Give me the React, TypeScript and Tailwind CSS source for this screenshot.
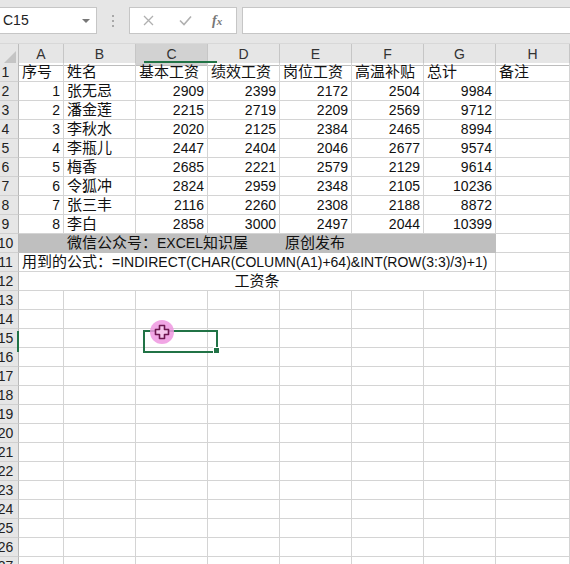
import React from "react";

const cols = ["A", "B", "C", "D", "E", "F", "G", "H"];
const gridCols = "grid grid-cols-[19px_45px_72px_72px_72px_72px_72px_72px_74px]";

const headers = ["序号", "姓名", "基本工资", "绩效工资", "岗位工资", "高温补贴", "总计", "备注"];

const people: [number, string, number, number, number, number, number][] = [
  [1, "张无忌", 2909, 2399, 2172, 2504, 9984],
  [2, "潘金莲", 2215, 2719, 2209, 2569, 9712],
  [3, "李秋水", 2020, 2125, 2384, 2465, 8994],
  [4, "李瓶儿", 2447, 2404, 2046, 2677, 9574],
  [5, "梅香", 2685, 2221, 2579, 2129, 9614],
  [6, "令狐冲", 2824, 2959, 2348, 2105, 10236],
  [7, "张三丰", 2116, 2260, 2308, 2188, 8872],
  [8, "李白", 2858, 3000, 2497, 2044, 10399],
];

// Chinese text renders a little wider than the Latin digits in the sheet
function Zh({ children }: { children: React.ReactNode }) {
  return <span className="text-[15px]">{children}</span>;
}

function RowHead({ n }: { n: number }) {
  return (
    <div className="flex h-[19px] items-center overflow-hidden border-r border-b border-r-[#b8b8b8] border-b-[#d0d0d0] bg-[#e6e6e6] text-[#222]">
      <div className="flex w-[11px] shrink-0 justify-center whitespace-nowrap">{n}</div>
    </div>
  );
}

function Cell({ children, right }: { children?: React.ReactNode; right?: boolean }) {
  return (
    <div
      className={
        "flex h-[19px] items-center overflow-hidden whitespace-nowrap border-r border-b border-[#d4d4d4] " +
        (right ? "justify-end pr-[3px]" : "pl-[3px]")
      }
    >
      {children}
    </div>
  );
}

function PlusCursor() {
  return (
    <svg width="16" height="16" viewBox="0 0 16 16">
      <path
        d="M5.5 1.5h5v4h4v5h-4v4h-5v-4h-4v-5h4z"
        fill="#f6c6ec"
        stroke="#6e1750"
        strokeWidth="1.6"
        strokeLinejoin="round"
      />
    </svg>
  );
}

export default function App() {
  return (
    <div className="relative h-[564px] w-[570px] overflow-hidden bg-white font-['Liberation_Sans','Noto_Sans_CJK_SC',sans-serif] text-[14px] text-[#111]">
      {/* formula bar */}
      <div className="flex h-[44px] items-start border-b border-[#d8d8d8] bg-[#e6e6e6] pt-[7px]">
        <div className="flex h-[27px] w-[97px] items-center justify-between border border-l-0 border-[#c6c6c6] bg-white pl-[3px] pr-[6px]">
          <span className="text-[14px] text-[#222]">C15</span>
          <span className="h-0 w-0 border-x-[4px] border-t-[4px] border-x-transparent border-t-[#777]" />
        </div>
        <div className="ml-[15px] mt-[8px] flex flex-col gap-[3px]">
          <span className="h-[2px] w-[2px] bg-[#a8a8a8]" />
          <span className="h-[2px] w-[2px] bg-[#a8a8a8]" />
          <span className="h-[2px] w-[2px] bg-[#a8a8a8]" />
        </div>
        <div className="ml-[15px] flex h-[27px] w-[108px] items-center border border-[#c6c6c6] bg-white">
          <svg className="ml-[13px]" width="11" height="11" viewBox="0 0 11 11">
            <path d="M1 1l9 9M10 1l-9 9" stroke="#b0b0b0" strokeWidth="1.3" />
          </svg>
          <svg className="ml-[25px]" width="13" height="11" viewBox="0 0 13 11">
            <path d="M1 5.5l4 4L12 1.5" fill="none" stroke="#b0b0b0" strokeWidth="1.6" />
          </svg>
          <span className="ml-[20px] font-['Liberation_Serif',serif] text-[14px] font-bold italic text-[#777]">
            f<span className="text-[11px]">x</span>
          </span>
        </div>
        <div className="ml-[5px] h-[27px] flex-1 border border-r-0 border-[#c6c6c6] bg-white" />
      </div>

      {/* column headers */}
      <div className={gridCols + " h-[19px] bg-[#e6e6e6] text-[#333]"}>
        <div className="flex items-end justify-end border-r border-b border-[#bdbdbd] pb-[2px] pr-[2px]">
          <svg width="12" height="12" viewBox="0 0 12 12">
            <path d="M12 0V12H0z" fill="#c4c4c4" />
          </svg>
        </div>
        {cols.map((c) => (
          <div
            key={c}
            className={
              "flex items-center justify-center border-r border-b border-r-[#c6c6c6] border-b-[#bdbdbd] " +
              (c === "C" ? "bg-[#d2d2d2]" : "")
            }
          >
            {c}
          </div>
        ))}
      </div>

      {/* sheet */}
      <div className={gridCols}>
        <RowHead n={1} />
        {headers.map((h) => (
          <Cell key={h}>
            <Zh>{h}</Zh>
          </Cell>
        ))}

        {people.map((p, i) => (
          <React.Fragment key={p[0]}>
            <RowHead n={i + 2} />
            <Cell right>{p[0]}</Cell>
            <Cell>
              <Zh>{p[1]}</Zh>
            </Cell>
            <Cell right>{p[2]}</Cell>
            <Cell right>{p[3]}</Cell>
            <Cell right>{p[4]}</Cell>
            <Cell right>{p[5]}</Cell>
            <Cell right>{p[6]}</Cell>
            <Cell />
          </React.Fragment>
        ))}

        <RowHead n={10} />
        <div className="col-span-7 flex h-[19px] items-center whitespace-nowrap bg-[#bfbfbf] pl-[48px]">
          <span className="w-[218px]">
            <Zh>微信公众号：</Zh>EXCEL<Zh>知识屋</Zh>
          </span>
          <Zh>原创发布</Zh>
        </div>
        <Cell />

        <RowHead n={11} />
        <div className="col-span-7 flex h-[19px] items-center whitespace-nowrap border-r border-b border-[#d4d4d4] pl-[3px]">
          <Zh>用到的公式：</Zh>
          <span>=INDIRECT(CHAR(COLUMN(A1)+64)&amp;INT(ROW(3:3)/3)+1)</span>
        </div>
        <Cell />

        <RowHead n={12} />
        <div className="col-span-7 flex h-[19px] items-center justify-center border-r border-b border-[#d4d4d4]">
          <Zh>工资条</Zh>
        </div>
        <Cell />

        {Array.from({ length: 15 }, (_, i) => i + 13).map((n) => (
          <React.Fragment key={n}>
            <RowHead n={n} />
            {cols.map((c) => (
              <Cell key={c} />
            ))}
          </React.Fragment>
        ))}
      </div>

      {/* selection overlays */}
      <div className="absolute left-[144px] top-[61px] h-[2px] w-[73px] bg-[#217346]" />
      <div className="absolute left-[17px] top-[331px] h-[21px] w-[2px] bg-[#217346]" />
      <div className="absolute left-[143px] top-[330px] h-[23px] w-[75px] border-2 border-[#217346]" />
      <div className="absolute left-[213px] top-[347px] h-[7px] w-[7px] border border-white bg-[#217346]" />

      {/* click cursor */}
      <div className="absolute left-[150px] top-[320px] flex h-[24px] w-[24px] items-center justify-center rounded-full bg-[#ee96e0]/85">
        <PlusCursor />
      </div>
    </div>
  );
}
